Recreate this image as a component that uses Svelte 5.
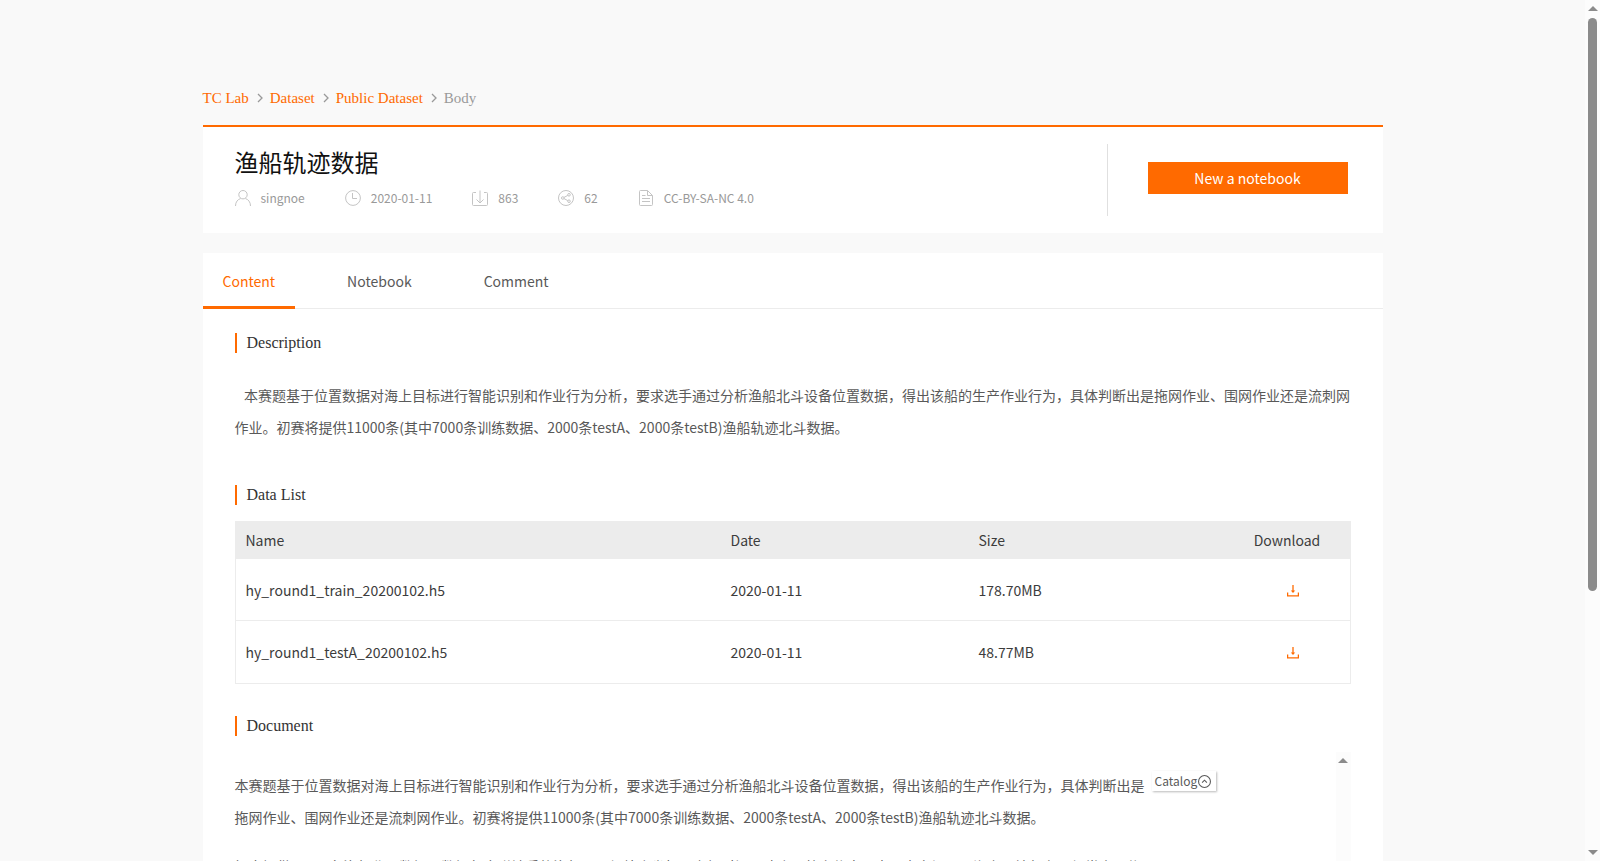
<script lang="ts">
  type DataFile = { name: string; date: string; size: string };

  const crumbs = ["TC Lab", "Dataset", "Public Dataset"];
  const tabs = ["Content", "Notebook", "Comment"];
  const meta = [
    { icon: "user", text: "singnoe" },
    { icon: "clock", text: "2020-01-11" },
    { icon: "download", text: "863" },
    { icon: "share", text: "62" },
    { icon: "license", text: "CC-BY-SA-NC 4.0" },
  ];
  const files: DataFile[] = [
    { name: "hy_round1_train_20200102.h5", date: "2020-01-11", size: "178.70MB" },
    { name: "hy_round1_testA_20200102.h5", date: "2020-01-11", size: "48.77MB" },
  ];
  const summary =
    "本赛题基于位置数据对海上目标进行智能识别和作业行为分析，要求选手通过分析渔船北斗设备位置数据，得出该船的生产作业行为，具体判断出是拖网作业、围网作业还是流刺网作业。初赛将提供11000条(其中7000条训练数据、2000条testA、2000条testB)渔船轨迹北斗数据。";
  const details =
    "初赛提供11000条渔船北斗数据，数据包含脱敏后的渔船ID、经纬度坐标、上报时间、速度、航向信息，由于真实场景下海上环境复杂，经常出现信号丢失，设备故障等原因导致的上报坐标错误、上报数据丢失、甚至有些设备疯狂上报等。";

  let activeTab = $state("Content");
</script>

<div class="page">
  <div class="view">
    <main>
      <nav class="crumbs">
        {#each crumbs as crumb}
          <a href="#top">{crumb}</a>
          <svg class="sep" viewBox="0 0 6 10"><path d="M1 1l4 4-4 4" /></svg>
        {/each}
        <span>Body</span>
      </nav>

      <header class="card head">
        <div class="info">
          <h1>渔船轨迹数据</h1>
          <ul class="meta">
            {#each meta as m}
              <li>
                <svg viewBox="0 0 16 16">
                  {#if m.icon === "user"}
                    <circle cx="8" cy="4.7" r="4.2" />
                    <path d="M.5 16c0-4 2.2-6.6 5-7.4M15.5 16c0-4-2.2-6.6-5-7.4" />
                  {:else if m.icon === "clock"}
                    <circle cx="8" cy="8" r="7.4" />
                    <path d="M7.5 3v5.5H12" />
                  {:else if m.icon === "download"}
                    <path d="M4 2.5H1.5q-1 0-1 1v11q0 1 1 1h13q1 0 1-1v-11q0-1-1-1H12M8 .5v12.5M4.5 9.5L8 13l3.5-3.5" />
                  {:else if m.icon === "share"}
                    <circle cx="8" cy="8" r="7.5" />
                    <circle cx="4.8" cy="8" r="1.3" />
                    <circle cx="11" cy="4.8" r="1.3" />
                    <circle cx="11" cy="11.2" r="1.3" />
                    <path d="M6 7.4l3.8-2M6 8.6l3.8 2" />
                  {:else}
                    <path d="M9.5.5h-7q-1 0-1 1v13q0 1 1 1h11q1 0 1-1v-9zM9.5.5v5h5M4 5.5h3.5M4 8.5h8M4 11.5h8" />
                  {/if}
                </svg>
                {m.text}
              </li>
            {/each}
          </ul>
        </div>
        <div class="action">
          <button type="button">New a notebook</button>
        </div>
      </header>

      <section class="card">
        <div class="tabs" role="tablist">
          {#each tabs as tab}
            <button
              type="button"
              role="tab"
              aria-selected={activeTab === tab}
              class:active={activeTab === tab}
              onclick={() => (activeTab = tab)}>{tab}</button
            >
          {/each}
        </div>

        <div class="body">
          <h2>Description</h2>
          <p class="summary">&nbsp;&nbsp;&nbsp;{summary}</p>

          <h2>Data List</h2>
          <table>
            <thead>
              <tr>
                <th>Name</th>
                <th class="date">Date</th>
                <th class="size">Size</th>
                <th class="get">Download</th>
              </tr>
            </thead>
            <tbody>
              {#each files as f}
                <tr>
                  <td>{f.name}</td>
                  <td>{f.date}</td>
                  <td>{f.size}</td>
                  <td class="get">
                    <a href="#download" aria-label={`Download ${f.name}`}>
                      <svg viewBox="0 0 12 12">
                        <path d="M.6 7.5v3.4h10.8V7.5" />
                        <path d="M6 0v7" />
                        <path class="tip" d="M3.8 5.5h4.4L6 8z" />
                      </svg>
                    </a>
                  </td>
                </tr>
              {/each}
            </tbody>
          </table>

          <h2>Document</h2>
          <div class="doc">
            <article>
              <p>{summary}</p>
              <p>{details}</p>
            </article>
            <aside>
              <button type="button">
                Catalog
                <svg viewBox="0 0 12 12">
                  <circle cx="6" cy="6" r="5.5" />
                  <path d="M3.8 7L6 4.8 8.2 7" />
                </svg>
              </button>
            </aside>
            <div class="bar">
              <i class="up"></i>
              <i class="down"></i>
            </div>
          </div>
        </div>
      </section>
    </main>
  </div>
  <div class="bar">
    <i class="up"></i>
    <div class="track"><div class="thumb"></div></div>
    <i class="down"></i>
  </div>
</div>

<style>
  :global(body) {
    margin: 0;
    background: #f9f9f9;
  }

  .page {
    display: flex;
    height: 100vh;
    font: 14px/20px "Noto Sans CJK SC", sans-serif;
    color: #595959;
  }

  .view {
    flex: 1;
    overflow-y: auto;
  }

  main {
    max-width: 1180px;
    margin: 0 auto;
    padding: 88px 0 40px;
  }

  .bar {
    display: flex;
    flex-direction: column;
    align-items: center;
    box-sizing: border-box;
    width: 15px;
    padding: 6px 0;
    background: #fcfcfc;
  }

  .up,
  .down {
    border: 5px solid transparent;
    border-top: 0;
    border-bottom-color: #8b8b8b;
  }

  .down {
    margin-top: auto;
    border-top: 5px solid #8b8b8b;
    border-bottom: 0;
  }

  .track {
    flex: 1;
    width: 9px;
    margin: 7px 0 2px;
  }

  .thumb {
    height: 69%;
    border-radius: 5px;
    background: #8b8b8b;
  }

  svg {
    fill: none;
    stroke: currentColor;
    flex: none;
  }

  h1,
  h2,
  p,
  ul {
    margin: 0;
    padding: 0;
    font-weight: 400;
  }

  button {
    font: inherit;
    color: inherit;
    border: 0;
    background: none;
    cursor: pointer;
  }

  .crumbs {
    display: flex;
    align-items: center;
    height: 20px;
    margin-bottom: 17px;
    font-family: "Liberation Serif", serif;
    font-size: 15px;
    color: #999;
  }

  .crumbs a {
    color: #ff6a00;
    text-decoration: none;
  }

  .sep {
    width: 6px;
    height: 10px;
    margin: 0 7px 0 8px;
    stroke-width: 1.3;
  }

  .card {
    background: #fff;
  }

  .head {
    display: flex;
    justify-content: space-between;
    align-items: center;
    height: 106px;
    margin-bottom: 20px;
    padding: 0 35px 0 32px;
    border-top: 2px solid #ff6a00;
  }

  h1 {
    font-size: 24px;
    line-height: 36px;
    color: #111;
  }

  .meta {
    display: flex;
    gap: 40px;
    list-style: none;
    font-size: 12px;
    line-height: 36px;
    color: #999;
  }

  .meta li {
    display: flex;
    align-items: center;
    gap: 10px;
  }

  .meta svg {
    width: 16px;
    height: 16px;
    color: #c4c4c4;
  }

  .action {
    display: flex;
    height: 72px;
    box-sizing: border-box;
    padding: 18px 0 22px 40px;
    border-left: 1px solid #e0e0e0;
  }

  .action button {
    width: 200px;
    background: #ff6a00;
    color: #fff;
  }

  .tabs {
    display: flex;
    gap: 32px;
    height: 55px;
    border-bottom: 1px solid #ececec;
  }

  .tabs button {
    height: 56px;
    padding: 3px 20px 0;
    border-bottom: 3px solid transparent;
  }

  .tabs .active {
    border-color: #ff6a00;
    color: #ff6a00;
  }

  .body {
    padding: 24px 32px 40px;
  }

  h2 {
    padding-left: 10px;
    border-left: 2px solid #ff6a00;
    font: 16px/20px "Liberation Serif", serif;
    color: #333;
  }

  .summary {
    margin: 26px 0 42px;
    line-height: 32px;
  }

  table {
    width: 100%;
    margin: 16px 0 32px;
    border: 1px solid #ececec;
    border-spacing: 0;
    table-layout: fixed;
    color: #3c3c3c;
  }

  th,
  td {
    height: 61px;
    padding: 0 10px;
    border-bottom: 1px solid #ececec;
    font-weight: 400;
    text-align: left;
  }

  tr:last-child td {
    border-color: transparent;
  }

  th {
    height: 36px;
    background: #ececec;
  }

  .date {
    width: 228px;
  }

  .size {
    width: 236px;
  }

  .get {
    width: 105px;
    text-align: center;
  }

  td a {
    display: flex;
    justify-content: center;
    padding: 2px 0 0 12px;
    color: #ff6a00;
  }

  td svg {
    width: 12px;
    height: 12px;
    stroke-width: 1.3;
  }

  .tip {
    fill: currentColor;
    stroke: none;
  }

  .doc {
    display: flex;
    height: 440px;
    margin-top: 16px;
  }

  article {
    flex: 1;
    padding-top: 17px;
    line-height: 32px;
  }

  article p {
    margin-bottom: 17px;
  }

  aside {
    width: 184px;
    padding-top: 19px;
  }

  aside button {
    display: flex;
    align-items: center;
    gap: 1px;
    padding: 0 5px 0 3px;
    font-size: 12px;
    line-height: 20px;
    box-shadow: 1px 1px 2px #bbb;
  }

  aside svg {
    width: 13px;
    height: 13px;
  }
</style>
